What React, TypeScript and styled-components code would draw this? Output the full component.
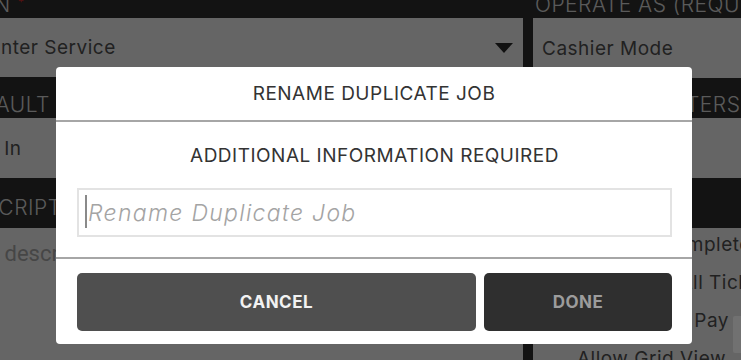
import React from "react";
import styled, { createGlobalStyle } from "styled-components";

const UI = `"Inter", "Liberation Sans", sans-serif`;

const GlobalStyle = createGlobalStyle`
  html, body {
    margin: 0;
    padding: 0;
    width: 741px;
    height: 360px;
    overflow: hidden;
    background: #2a2a2a;
  }
  * { box-sizing: border-box; }
`;

/* ---------- background page ---------- */

const Page = styled.div`
  display: grid;
  grid-template-columns: 569px 569px;
  column-gap: 10px;
  margin: -23px 0 0 -46px;
  font-family: ${UI};
`;

const Column = styled.div`
  display: flex;
  flex-direction: column;
`;

const Header = styled.div<{ $h: number; $pb?: number }>`
  height: ${(p) => p.$h}px;
  display: flex;
  align-items: flex-end;
  padding: 0 2px ${(p) => p.$pb ?? 3}px;
  font-size: 21px;
  line-height: 21px;
  font-weight: 300;
  letter-spacing: 0.5px;
  color: #c8c8c8;
  white-space: nowrap;
  overflow: hidden;
`;

const Required = styled.span`
  color: #e22626;
  font-size: 13px;
  line-height: 13px;
  align-self: flex-start;
  margin: 19px 0 0 7px;
`;

const Field = styled.div<{ $h: number }>`
  height: ${(p) => p.$h}px;
  background: #e0e0e0;
  display: flex;
  align-items: center;
  justify-content: space-between;
  padding: 0 10px 0 9px;
  font-size: 19px;
  letter-spacing: 0.5px;
  color: #4b4b4b;
  white-space: nowrap;
`;

const Caret = styled.span`
  width: 0;
  height: 0;
  border-left: 9px solid transparent;
  border-right: 9px solid transparent;
  border-top: 10px solid #262626;
`;

const TextArea = styled.div`
  flex: 1;
  min-height: 160px;
  background: #e0e0e0;
  padding: 13px 8px;
  font-family: "Roboto", sans-serif;
  font-size: 22px;
  line-height: 26px;
  color: #9c9c9c;
  white-space: nowrap;
`;

const List = styled.div`
  flex: 1;
  min-height: 160px;
  background: #e0e0e0;
  display: flex;
  flex-direction: column;
  padding: 0 0 0 44px;
`;

const Item = styled.div`
  height: 38px;
  display: flex;
  align-items: center;
  padding-bottom: 6px;
  font-size: 19px;
  letter-spacing: 0.5px;
  color: #4b4b4b;
  white-space: nowrap;
`;

const ValueBox = styled.span`
  align-self: flex-start;
  width: 44px;
  height: 37px;
  margin: 12px 0 0 4px;
  background: #fbfbfb;
  border-radius: 2px;
`;

/* ---------- modal ---------- */

const Overlay = styled.div`
  position: fixed;
  inset: 0;
  background: rgba(0, 0, 0, 0.55);
  display: flex;
  align-items: flex-start;
  padding: 67px 0 0 56px;
  font-family: ${UI};
`;

const Modal = styled.div`
  width: 636px;
  background: #fff;
  border-radius: 4px;
  display: flex;
  flex-direction: column;
`;

const Title = styled.div`
  height: 55px;
  border-bottom: 2px solid #a6a6a6;
  display: flex;
  align-items: center;
  justify-content: center;
  font-size: 19px;
  letter-spacing: 0.5px;
  color: #333;
`;

const Body = styled.div`
  display: flex;
  flex-direction: column;
  padding: 0 20px 20px 21px;
  border-bottom: 2px solid #a6a6a6;
`;

const Subtitle = styled.div`
  height: 66px;
  display: flex;
  align-items: center;
  justify-content: center;
  font-size: 19px;
  letter-spacing: 0.5px;
  color: #333;
`;

const InputWrap = styled.div`
  position: relative;
  height: 49px;
`;

const TextInput = styled.input`
  width: 100%;
  height: 100%;
  border: 2px solid #e3e3e3;
  outline: none;
  padding: 0 0 0 9px;
  font-family: ${UI};
  font-size: 23px;
  font-style: italic;
  font-weight: 300;
  letter-spacing: 1.3px;
  color: #333;
  &::placeholder {
    color: #a4a4a4;
  }
`;

const Cursor = styled.span`
  position: absolute;
  left: 8px;
  top: 7px;
  bottom: 9px;
  width: 2px;
  background: #8a8a8a;
`;

const Footer = styled.div`
  display: flex;
  gap: 8px;
  padding: 14px 20px 13px 21px;
`;

const Button = styled.button<{ $primary?: boolean }>`
  height: 58px;
  border: none;
  border-radius: 5px;
  flex: ${(p) => (p.$primary ? "0 0 188px" : "1")};
  background: ${(p) => (p.$primary ? "#2f2f2f" : "#4f4f4f")};
  color: ${(p) => (p.$primary ? "#9c9c9c" : "#f2f2f2")};
  font-family: ${UI};
  font-size: 17px;
  font-weight: 700;
  letter-spacing: 0.5px;
  text-transform: uppercase;
`;

export default function App() {
  return (
    <>
      <GlobalStyle />
      <Page>
        <Column>
          <Header $h={41}>
            ICON<Required>*</Required>
          </Header>
          <Field $h={59}>
            Counter Service
            <Caret />
          </Field>
          <Header $h={41}>DEFAULT CHANNEL</Header>
          <Field $h={60}>Log In</Field>
          <Header $h={50} $pb={10}>
            DESCRIPTION
          </Header>
          <TextArea>Job description</TextArea>
        </Column>
        <Column>
          <Header $h={41}>OPERATE AS (REQUIRED)</Header>
          <Field $h={60}>Cashier Mode</Field>
          <Header $h={40}>KITCHEN PRINTERS</Header>
          <Field $h={60} />
          <Header $h={50} />
          <List>
            <Item>Mark As Complete</Item>
            <Item>Can Close All Tickets</Item>
            <Item>
              Allow Quick Pay
              <ValueBox />
            </Item>
            <Item>Allow Grid View</Item>
          </List>
        </Column>
      </Page>
      <Overlay>
        <Modal>
          <Title>RENAME DUPLICATE JOB</Title>
          <Body>
            <Subtitle>ADDITIONAL INFORMATION REQUIRED</Subtitle>
            <InputWrap>
              <TextInput placeholder="Rename Duplicate Job" />
              <Cursor />
            </InputWrap>
          </Body>
          <Footer>
            <Button>Cancel</Button>
            <Button $primary>Done</Button>
          </Footer>
        </Modal>
      </Overlay>
    </>
  );
}
